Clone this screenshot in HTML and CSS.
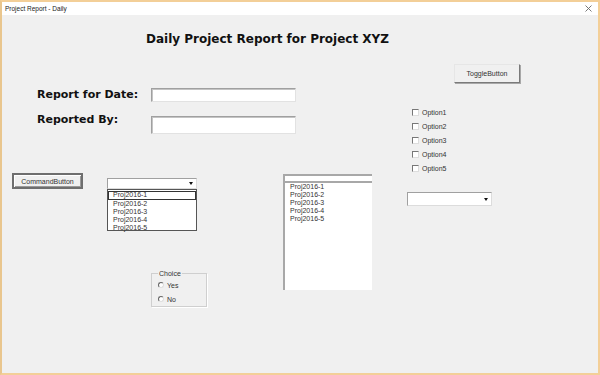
FILE: index.html
```html
<!DOCTYPE html>
<html lang="en">
<head>
    <meta charset="UTF-8">
    <title>Project Report - Daily</title>
    <link rel="stylesheet" href="styles.css">
</head>
<body>
    <div class="window">
        <!-- Title bar -->
        <div class="titlebar">
            <span class="title">Project Report - Daily</span>
            <svg class="close" width="7" height="7" viewBox="0 0 7 7">
                <path d="M0.5 0.5 L6.5 6.5 M6.5 0.5 L0.5 6.5" stroke="#6a6a6a" stroke-width="0.9"/>
            </svg>
        </div>

        <!-- Form -->
        <div class="form">
            <div class="col-left">
                <h1 class="heading">Daily Project Report for Project XYZ</h1>

                <div class="fields">
                    <div class="field-row">
                        <label class="field-label">Report for Date:</label>
                        <div class="textbox"></div>
                    </div>
                    <div class="field-row field-row-tall">
                        <label class="field-label field-label-up">Reported By:</label>
                        <div class="textbox textbox-tall"></div>
                    </div>
                </div>

                <div class="lower">
                    <button class="btn-command">CommandButton</button>

                    <div class="combo-col">
                        <div class="combo">
                            <span class="arrow"></span>
                        </div>
                        <ul class="droplist">
                            <li class="focused">Proj2016-1</li>
                            <li>Proj2016-2</li>
                            <li>Proj2016-3</li>
                            <li>Proj2016-4</li>
                            <li>Proj2016-5</li>
                        </ul>
                        <fieldset class="frame">
                            <legend>Choice</legend>
                            <div class="radio-row"><span class="radio"></span>Yes</div>
                            <div class="radio-row"><span class="radio"></span>No</div>
                        </fieldset>
                    </div>

                    <div class="listbox">
                        <div class="listbox-head"></div>
                        <ul class="listbox-items">
                            <li>Proj2016-1</li>
                            <li>Proj2016-2</li>
                            <li>Proj2016-3</li>
                            <li>Proj2016-4</li>
                            <li>Proj2016-5</li>
                        </ul>
                    </div>
                </div>
            </div>

            <div class="col-right">
                <button class="btn-toggle">ToggleButton</button>
                <div class="checks">
                    <div class="check-row"><span class="checkbox"></span>Option1</div>
                    <div class="check-row"><span class="checkbox"></span>Option2</div>
                    <div class="check-row"><span class="checkbox"></span>Option3</div>
                    <div class="check-row"><span class="checkbox"></span>Option4</div>
                    <div class="check-row"><span class="checkbox"></span>Option5</div>
                </div>
                <div class="combo combo-wide">
                    <span class="arrow"></span>
                </div>
            </div>
        </div>
    </div>
</body>
</html>
```

FILE: styles.css
```css
body {
    margin: 0;
    font-family: "Liberation Sans", Arial, sans-serif;
    font-size: 7px;
    color: #333;
}
.window {
    width: 600px;
    height: 375px;
    box-sizing: border-box;
    border: 2px solid #f3cf98;
    border-left-color: #e9c68e;
    background: #f0f0f0;
    display: flex;
    flex-direction: column;
}
.titlebar {
    height: 13px;
    background: #fff;
    display: flex;
    align-items: center;
    justify-content: space-between;
    padding: 0 6px 0 3px;
    flex: none;
}
.title {
    font-size: 6.5px;
    color: #222;
}
.close {
    display: block;
}
.form {
    display: flex;
    flex: 1;
}
.col-left {
    width: 403px;
    flex: none;
}
.col-right {
    flex: 1;
}
.heading {
    margin: 15px 0 0 144px;
    font-family: "DejaVu Sans", Verdana, sans-serif;
    font-size: 12px;
    line-height: 18px;
    font-weight: bold;
    color: #111;
    white-space: nowrap;
}

/* text fields */
.fields {
    margin: 40px 0 0 35px;
}
.field-row {
    display: flex;
    align-items: center;
}
.field-row-tall {
    margin-top: 14px;
    align-items: flex-start;
}
.field-label {
    width: 114px;
    font-family: "DejaVu Sans", Verdana, sans-serif;
    font-size: 11px;
    font-weight: bold;
    color: #111;
    line-height: 14px;
    white-space: nowrap;
}
.field-label-up {
    margin-top: -3px;
}
.textbox {
    width: 145px;
    height: 14px;
    box-sizing: border-box;
    background: #fff;
    border: 1px solid;
    border-color: #a0a0a0 #e2e2e2 #e2e2e2 #a0a0a0;
    box-shadow: inset 1px 1px #c4c4c4;
}
.textbox-tall {
    height: 18px;
}

/* lower controls */
.lower {
    display: flex;
    align-items: flex-start;
    margin-top: 38px;
}
.btn-command {
    margin: 1px 0 0 10px;
    width: 71px;
    height: 16px;
    padding: 0;
    font: inherit;
    color: #333;
    background: #f0f0f0;
    border: 2px solid #6e6e6e;
    box-shadow: inset 1px 1px #fff, inset -1px -1px #9a9a9a;
}
.combo-col {
    margin: 6px 0 0 24px;
    width: 90px;
}
.combo {
    height: 11px;
    box-sizing: border-box;
    background: #fff;
    border: 1px solid;
    border-color: #a0a0a0 #dcdcdc #dcdcdc #a0a0a0;
    position: relative;
}
.arrow {
    position: absolute;
    right: 3px;
    top: 3px;
    width: 0;
    height: 0;
    border-left: 2.5px solid transparent;
    border-right: 2.5px solid transparent;
    border-top: 3px solid #111;
}
.droplist {
    list-style: none;
    margin: 0;
    padding: 1px 0 1px 0;
    height: 42px;
    box-sizing: border-box;
    background: #fff;
    border: 1px solid #555;
}
.droplist li {
    height: 8px;
    line-height: 8px;
    padding-left: 5px;
    box-sizing: border-box;
}
.droplist li.focused {
    border: 1px solid #333;
    padding-left: 4px;
    line-height: 6px;
    height: 9px;
}
.frame {
    margin: 39px 0 0 44px;
    padding: 1px 0 0 6px;
    width: 56px;
    box-sizing: border-box;
    border: 1px solid #cfcfcf;
    box-shadow: 1px 1px #fff;
}
.frame legend {
    padding: 0 1px;
    margin-left: 0;
    line-height: 7px;
}
.radio-row {
    display: flex;
    align-items: center;
    height: 14px;
}
.radio {
    width: 6px;
    height: 6px;
    box-sizing: border-box;
    border-radius: 50%;
    border: 1px solid;
    border-color: #666 #ddd #ddd #666;
    background: #fff;
    margin-right: 3px;
}
.listbox {
    margin: 2px 0 0 86px;
    width: 89px;
    height: 116px;
    box-sizing: border-box;
    background: #fff;
    border-left: 2px solid #a8a8a8;
    border-top: 2px solid #a8a8a8;
}
.listbox-head {
    height: 5px;
    border-bottom: 2px solid #a8a8a8;
}
.listbox-items {
    list-style: none;
    margin: 0;
    padding: 0 0 0 5px;
}
.listbox-items li {
    line-height: 8px;
}

/* right column */
.btn-toggle {
    display: block;
    margin: 49px 0 0 49px;
    width: 66px;
    height: 19px;
    padding: 0;
    font: inherit;
    color: #333;
    background: #f0f0f0;
    border: 1px solid;
    border-color: #e6e6e6 #7a7a7a #7a7a7a #e6e6e6;
    box-shadow: 1px 1px #a8a8a8;
}
.checks {
    margin: 22px 0 0 7px;
}
.check-row {
    display: flex;
    align-items: center;
    height: 14px;
}
.checkbox {
    width: 7px;
    height: 7px;
    box-sizing: border-box;
    background: #fff;
    border: 1px solid;
    border-color: #777 #ddd #ddd #777;
    margin-right: 3px;
}
.combo-wide {
    margin: 17px 0 0 2px;
    width: 85px;
    height: 14px;
}
.combo-wide .arrow {
    top: 5px;
}
```
